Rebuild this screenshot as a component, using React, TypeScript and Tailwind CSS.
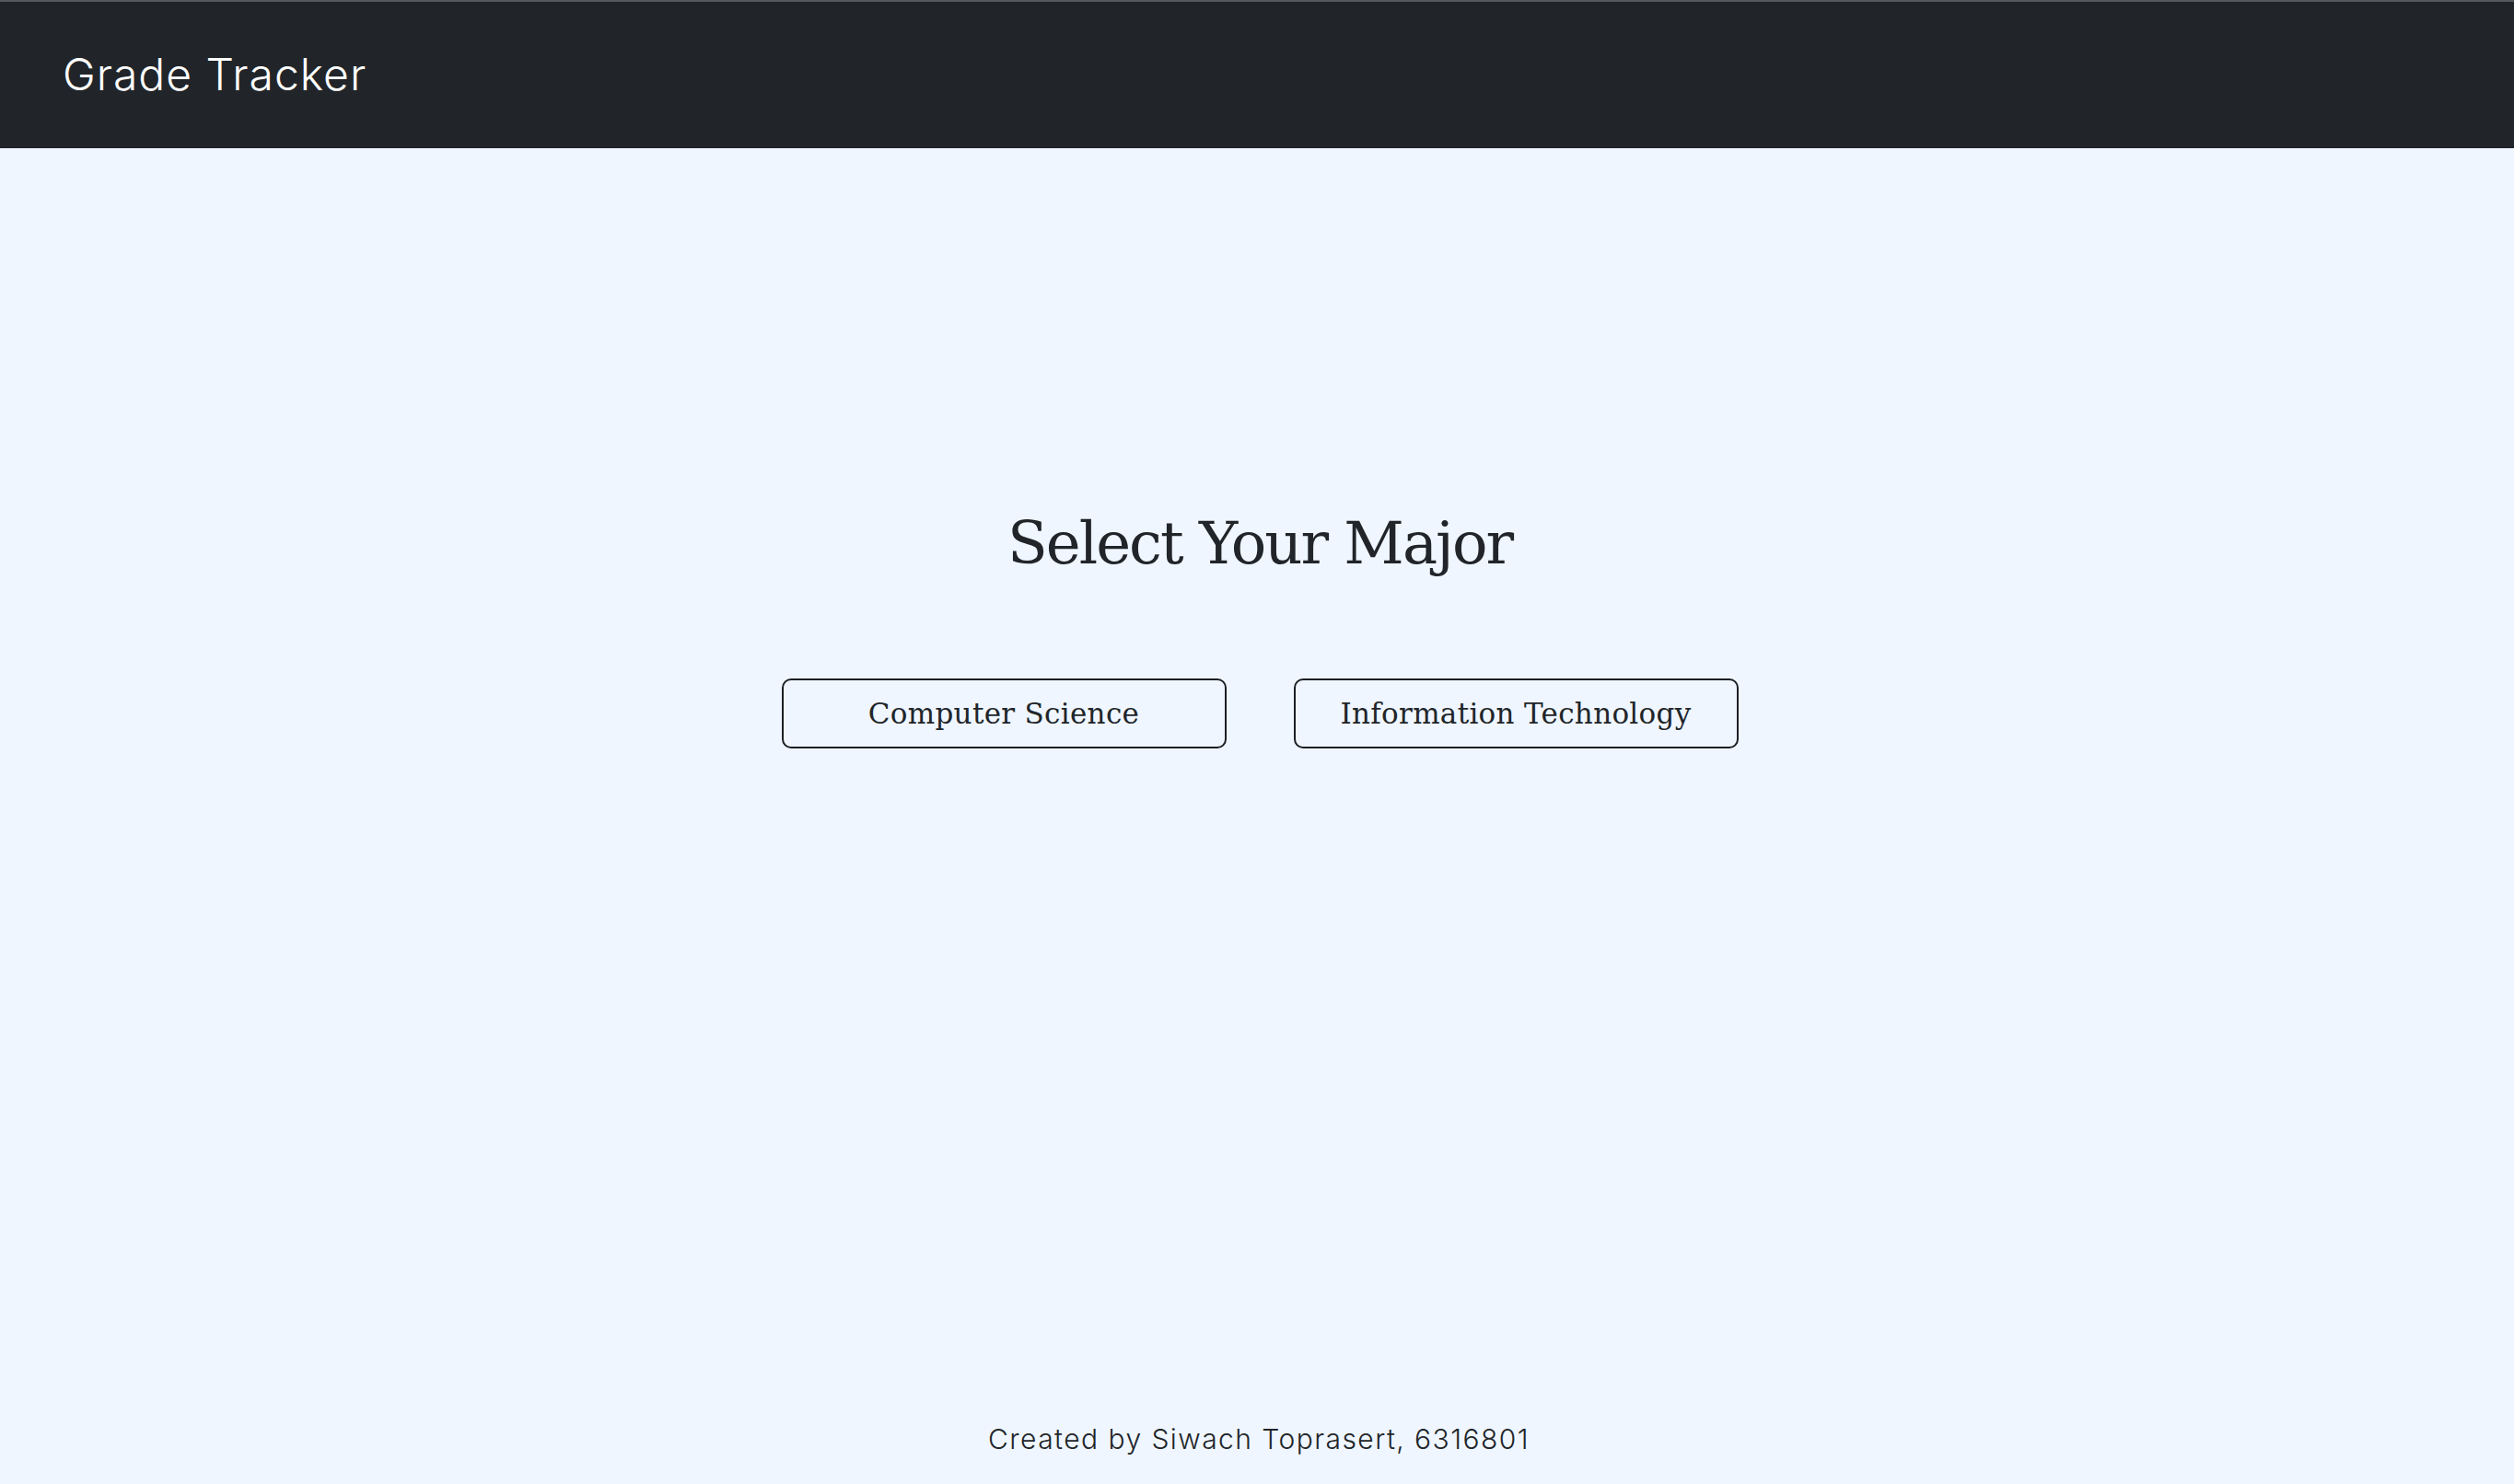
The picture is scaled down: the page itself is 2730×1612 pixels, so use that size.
import React from 'react';

const majors = ['Computer Science', 'Information Technology'];

const App: React.FC = () => {
  return (
    <div className="min-h-screen flex flex-col bg-[#eff6ff] text-[#212529]">
      {/* Navbar */}
      <nav className="h-[161px] border-t-2 border-[#55575b] bg-[#212529] flex items-center pl-[68px]">
        <span className="font-['Inter',sans-serif] text-white text-[48px] font-light tracking-[1px] leading-none -mt-[2px]">
          Grade Tracker
        </span>
      </nav>

      {/* Main */}
      <main className="flex-1 flex flex-col items-center pt-[392px] pl-[6px]">
        <h1 className="font-['DejaVu_Serif',serif] text-[64px] tracking-[-2px] leading-[74px] font-normal">
          Select Your Major
        </h1>
        <div className="flex gap-[73px] mt-[110px]">
          {majors.map((m) => (
            <button
              key={m}
              type="button"
              className="w-[483px] h-[76px] border-2 border-[#1c1f23] rounded-[10px] bg-transparent font-['DejaVu_Serif',serif] text-[31px] tracking-[0.3px] text-[#212529]"
            >
              {m}
            </button>
          ))}
        </div>
      </main>

      {/* Footer */}
      <footer className="pb-[34px] pl-[4px] text-center font-['Inter',sans-serif] text-[30px] font-light tracking-[1.45px] leading-none">
        Created by Siwach Toprasert, 6316801
      </footer>
    </div>
  );
};

export default App;
